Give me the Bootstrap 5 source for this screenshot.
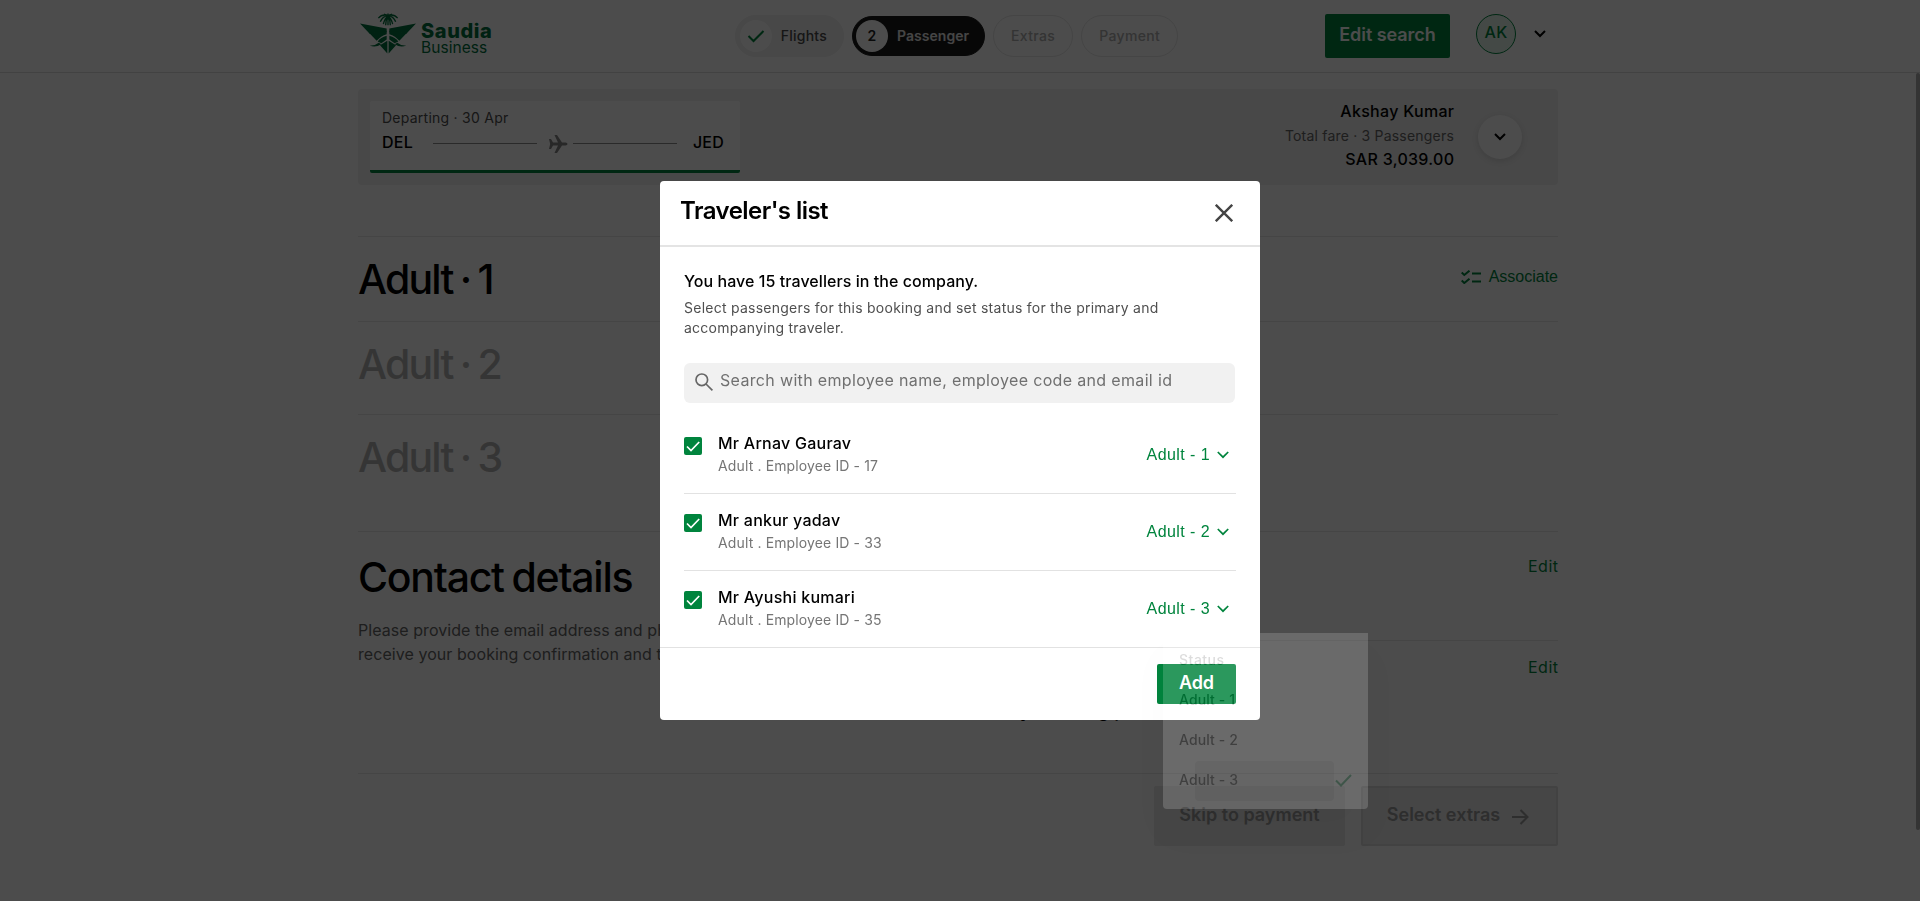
<!DOCTYPE html>
<html lang="en">
<head>
<meta charset="utf-8">
<meta name="viewport" content="width=device-width, initial-scale=1">
<title>Saudia Business - Passenger</title>
<link href="https://cdn.jsdelivr.net/npm/bootstrap@5.3.0/dist/css/bootstrap.min.css" rel="stylesheet">
<style>
  :root { --sv-green: #00843d; --sv-line: #e6e6e6; --sv-grey: #666; }
  body { font-family: Inter, "Liberation Sans", sans-serif; font-size: 16px; line-height: 24px; color: #000; background: #fff; height: 901px; overflow: hidden; }
  svg { display: block; flex: none; }
  .page-col { width: 1200px; margin-left: 358px; }
  .rule-top { border-top: 1px solid var(--sv-line); }
  .green { color: var(--sv-green); }
  .fw-mid { font-weight: 500; }
  .fs14 { font-size: 14px; line-height: 20px; }

  .site-head { height: 73px; border-bottom: 1px solid #dcdcdc; }
  .head-row { height: 72px; padding-right: 12px; }
  .brand-mark { margin: 0 0 6px 2px; }
  .brand-text { color: #00703c; margin: 6px 0 0 5px; width: 77px; }
  .brand-name { font-weight: 800; font-size: 20px; line-height: 18px; letter-spacing: .6px; }
  .brand-sub { font-size: 15.5px; line-height: 16px; letter-spacing: .05px; }
  .steps { margin-left: 237px; gap: 8px; }
  .step { height: 42px; border-radius: 21px; border: 1px solid #e6e6e6; font-size: 14px; font-weight: 500; color: #adadad; padding: 0 17px; letter-spacing: .35px; }
  .step-done { background: #f0f0f0; border-color: #f0f0f0; color: #4a4a4a; padding: 0 16px 0 4px; letter-spacing: .25px; width: 109px; }
  .step-now { height: 40px; background: #1a1a1a; border-color: #1a1a1a; color: #e8e8e8; font-weight: 600; padding: 0 14px 0 3px; width: 133px; letter-spacing: .05px; }
  .step-dot { width: 32px; height: 32px; border-radius: 50%; background: #fff; color: #222; margin-right: 9px; }
  .btn-search { width: 125px; height: 44px; border: 0; border-radius: 2px; background: var(--sv-green); color: #fff; font-weight: 600; font-size: 18px; padding: 0 0 3px; letter-spacing: -.05px; line-height: 38px; }
  .avatar { width: 40px; height: 40px; border-radius: 50%; border: 1px solid var(--sv-green); background: #e5f3ec; color: var(--sv-green); font-weight: 500; letter-spacing: .4px; margin: -4px 18px 0 26px; padding-bottom: 4px; }
  .head-chevron { margin-top: -4px; }

  .fare-bar { height: 96px; background: #f0f0f0; border-radius: 4px; margin-top: 16px; padding: 12px; }
  .leg { width: 370px; height: 72px; background: #fff; border-bottom: 3px solid var(--sv-green); border-radius: 2px; padding: 7px 16px 0 12px; }
  .leg .fs14 { color: #4d4d4d; letter-spacing: .25px; }
  .leg .fw-mid { letter-spacing: .22px; margin-top: 2px; }
  .leg-line { height: 1px; width: 104px; background: #8c8c8c; margin-top: 3px; }
  .leg-line-a { margin-left: 20px; margin-right: 9px; }
  .leg-line-b { margin-left: 3px; margin-right: auto; }
  .leg-plane { margin-top: 4px; }
  .fare-text { margin: -5px 24px 0 0; }
  .fare-text .fs14 { color: var(--sv-grey); letter-spacing: .2px; margin-top: 3px; margin-bottom: 1px; }
  .fare-text .fw-mid { letter-spacing: .3px; margin-right: -.3px; }
  .round-btn { width: 44px; height: 44px; border-radius: 50%; background: #fff; box-shadow: 0 2px 6px rgba(0,0,0,.12); margin-right: 24px; }

  .pax { height: 93px; padding-top: 17px; }
  .pax-first { height: 85px; margin-top: 51px; }
  .pax-last { height: 117px; }
  .big-title { font-weight: 500; font-size: 41px; line-height: 50px; margin: 0; letter-spacing: -1.8px; word-spacing: -2px; }
  .big-title.contact-title { letter-spacing: -1.25px; }
  .dim { color: #b3b3b3; }
  .arial { font-family: "Liberation Sans", Arial, sans-serif; }
  .associate { margin-top: 11px; gap: 8px; height: 24px; }
  .edit-link { letter-spacing: .5px; margin-right: -.5px; }
  .contact-sec { height: 242px; }
  .contact-left { width: 602px; padding-top: 20px; }
  .contact-left p { margin: 16px 0 0; color: var(--sv-grey); white-space: nowrap; letter-spacing: .06px; }
  .contact-right { width: 598px; }
  .contact-a { height: 108px; padding-top: 22px; }
  .contact-b { padding-top: 14px; }
  .contact-b h3 { font-size: 19px; font-weight: 500; line-height: 24px; margin: 20px 0 0; }
  .foot-row { padding-top: 12px; gap: 16px; }
  .btn-off { height: 60px; border-radius: 2px; background: #e9e9e9; border: 2px solid #e9e9e9; color: #999; font-weight: 600; font-size: 18px; padding: 0 0 3px; }
  .btn-skip { width: 191px; }
  .btn-extras { width: 197px; border-color: #dcdcdc; gap: 12px; padding-right: 3px; }
  .scroll-thumb { position: absolute; right: 0; top: 73px; width: 4px; height: 757px; background: #adadad; border-radius: 2px; }

  .modal-backdrop.dark { opacity: .7; }
  .modal-dialog.sized { max-width: 600px; margin: 181px auto 0; }
  .modal-content { border: 0; border-radius: 4px; height: 539px; color: #000; }
  .modal-header { height: 66px; border-bottom: 2px solid #e4e4e4; border-radius: 0; padding: 15px 27px 0 20px; align-items: flex-start; }
  .modal-title { font-size: 24px; font-weight: 600; line-height: 30px; letter-spacing: -.54px; }
  .x-btn { border: 0; background: none; padding: 0; margin-top: 8px; }
  .modal-body { padding: 22px 24px 0; height: 400px; flex: none; }
  .t-lead { letter-spacing: .06px; }
  .t-sub { margin: 5px 0 0; color: #4f4f4f; letter-spacing: .25px; }
  .search-box { height: 40px; margin-top: 25px; border-radius: 6px; background: #f1f1f1; color: #707070; padding: 0 11px; gap: 7px; letter-spacing: .34px; margin-right: 1px; }
  .search-box svg { margin-bottom: 3px; }
  .search-box span { padding-bottom: 6px; }
  .trav-list { padding-top: 14px; }
  .trav { height: 77px; border-bottom: 1px solid #e2e2e2; }
  .trav:last-child { border-bottom: 0; height: 76px; }
  .tick { width: 18px; height: 18px; border-radius: 2px; background: var(--sv-green); margin-top: 20px; }
  .trav-text { padding: 14px 0 0 16px; letter-spacing: .25px; }
  .trav-id { margin-top: 1px; color: #757575; letter-spacing: .13px; }
  .status-pick { letter-spacing: .43px; gap: 7px; padding-right: 7px; }
  .status-pick svg { margin-bottom: 1px; }
  .modal-footer { height: 73px; border-top: 1px solid #e2e2e2; padding: 16px 24px; }
  .modal-footer > .btn-add { margin: 0; width: 79px; height: 40px; border: 0; border-radius: 2px; background: var(--sv-green); color: #fff; font-weight: 600; font-size: 18px; padding: 0 0 3px; letter-spacing: -.1px; }

  /* status menu, halfway through its fade-out */
  .status-menu { position: absolute; z-index: 1100; left: 1163px; top: 633px; width: 205px; height: 176px; opacity: .17; background: #fff; border-radius: 0 0 4px 4px; padding: 7px 16px 0; box-shadow: 0 24px 40px 4px rgba(0,0,0,.12); }
  .status-menu div { height: 40px; font-size: 14px; line-height: 40px; letter-spacing: .1px; font-weight: 500; color: #000; }
  .status-menu .menu-head { color: #333; letter-spacing: .5px; }
  .menu-hi { position: absolute; left: 32px; top: 128px; width: 139px; height: 40px; border-radius: 4px; background: #e0e0e0; z-index: -1; }
</style>
<script src="https://cdn.jsdelivr.net/npm/bootstrap@5.3.0/dist/js/bootstrap.bundle.min.js"></script>
</head>
<body>
<header class="site-head">
  <div class="page-col head-row d-flex align-items-center">
    <svg class="brand-mark" width="56" height="41" viewBox="0 0 168 122" fill="#00703c">
      <g fill="none" stroke="#00703c" stroke-width="4">
        <path d="M84 9 V36 M84 9 Q75 14 70 33 M84 9 Q93 14 98 33 M84 8 Q68 8 61 26 M84 8 Q100 8 107 26 M84 7 Q66 2 55 15 M84 7 Q102 2 113 15 M84 9 Q78 18 77 36 M84 9 Q90 18 91 36"/>
        <path d="M72 3 L84 8 L96 3 M84 1 V10"/>
      </g>
      <path d="M0 31 L80 46 V57 Q54 54 29 62 Z M168 31 L88 46 V57 Q114 54 139 62 Z"/>
      <path d="M27 59 L80 53 V63 Q62 68 50 83 Z M141 59 L88 53 V63 Q106 68 118 83 Z"/>
      <path d="M53 85 Q62 73 80 68 V79 L64 90 Z M115 85 Q106 73 88 68 V79 L104 90 Z"/>
      <path d="M60 96 L82 83 V121 Z M108 96 L86 83 V121 Z"/>
      <path d="M29 97 Q44 99 56 89 L64 93 Q46 105 29 97 Z M139 97 Q124 99 112 89 L104 93 Q122 105 139 97 Z"/>
    </svg>
    <div class="brand-text">
      <div class="brand-name">Saudia</div>
      <div class="brand-sub">Business</div>
    </div>
    <div class="steps d-flex align-items-center">
      <div class="step step-done d-flex align-items-center"><span class="step-dot d-flex align-items-center justify-content-center"><svg width="18" height="14" viewBox="0 0 18 14" fill="none" stroke="#00843d" stroke-width="2"><path d="M1.5 7 L6.5 12 L16.5 2"/></svg></span>Flights</div>
      <div class="step step-now d-flex align-items-center"><span class="step-dot d-flex align-items-center justify-content-center">2</span>Passenger</div>
      <div class="step d-flex align-items-center">Extras</div>
      <div class="step d-flex align-items-center">Payment</div>
    </div>
    <button class="btn btn-search ms-auto">Edit search</button>
    <div class="avatar d-flex align-items-center justify-content-center">AK</div>
    <svg class="head-chevron" width="12" height="8" viewBox="0 0 12 8" fill="none" stroke="#000" stroke-width="2"><path d="M1 1 L6 6 L11 1"/></svg>
  </div>
</header>

<main class="page-col">
  <section class="fare-bar d-flex align-items-center">
    <div class="leg">
      <div class="fs14">Departing · 30 Apr</div>
      <div class="d-flex align-items-center fw-mid">
        <span>DEL</span>
        <span class="leg-line leg-line-a"></span>
        <svg class="leg-plane" width="24" height="20" viewBox="-3 -1 24 20" fill="#858585"><path d="M0 4 H2 L4 7.5 H9 L5.5 0 H8 L13 7.5 H16.5 Q18.5 7.8 18.5 9 Q18.5 10.2 16.5 10.5 H13 L8 18 H5.5 L9 10.5 H4 L2 14 H0 L1.2 9 Z"/></svg>
        <span class="leg-line leg-line-b"></span>
        <span>JED</span>
      </div>
    </div>
    <div class="fare-text ms-auto text-end">
      <div class="fw-mid">Akshay Kumar</div>
      <div class="fs14">Total fare · 3 Passengers</div>
      <div class="fw-mid">SAR 3,039.00</div>
    </div>
    <div class="round-btn d-flex align-items-center justify-content-center"><svg width="12" height="8" viewBox="0 0 12 8" fill="none" stroke="#000" stroke-width="2"><path d="M1 1 L6 6 L11 1"/></svg></div>
  </section>

  <section class="pax pax-first rule-top d-flex justify-content-between">
    <h1 class="big-title">Adult · 1</h1>
    <a class="associate arial green text-decoration-none d-flex align-items-center">
      <svg width="20" height="14" viewBox="0 0 20 14" fill="none" stroke="#00843d" stroke-width="2"><path d="M.7 2.6 L3.3 5 L8.5 .7 M.7 10.6 L3.3 13 L8.5 8.7 M11 3.5 H20 M11 11.5 H20"/></svg>
      Associate</a>
  </section>
  <section class="pax rule-top"><h1 class="big-title dim">Adult · 2</h1></section>
  <section class="pax pax-last rule-top"><h1 class="big-title dim">Adult · 3</h1></section>

  <section class="contact-sec rule-top d-flex">
    <div class="contact-left">
      <h1 class="big-title contact-title">Contact details</h1>
      <p>Please provide the email address and phone<br>receive your booking confirmation and travel</p>
    </div>
    <div class="contact-right">
      <div class="contact-a text-end green"><span class="edit-link">Edit</span></div>
      <div class="contact-b rule-top">
        <div class="text-end green"><span class="edit-link">Edit</span></div>
        <h3>Primary booking person</h3>
      </div>
    </div>
  </section>
  <section class="foot-row rule-top d-flex justify-content-end">
    <button class="btn btn-off btn-skip">Skip to payment</button>
    <button class="btn btn-off btn-extras d-flex align-items-center justify-content-center">Select extras
      <svg class="mt-1" width="17" height="16" viewBox="0 0 17 16" fill="none" stroke="#999" stroke-width="2"><path d="M0 8 H15.5 M8.5 1 L15.5 8 L8.5 15"/></svg></button>
  </section>
</main>
<div class="scroll-thumb"></div>

<div class="modal-backdrop dark show"></div>
<div class="modal d-block overflow-hidden" tabindex="-1">
  <div class="modal-dialog sized">
    <div class="modal-content">
      <div class="modal-header">
        <h2 class="modal-title">Traveler's list</h2>
        <button class="x-btn" aria-label="Close"><svg width="18" height="18" viewBox="0 0 18 18" fill="none" stroke="#444" stroke-width="2.4"><path d="M.8 .8 L17.2 17.2 M17.2 .8 L.8 17.2"/></svg></button>
      </div>
      <div class="modal-body">
        <div class="fw-mid t-lead">You have 15 travellers in the company.</div>
        <div class="fs14 t-sub">Select passengers for this booking and set status for the primary and<br>accompanying traveler.</div>
        <div class="search-box d-flex align-items-center">
          <svg width="18" height="18" viewBox="0 0 18 18" fill="none" stroke="#666" stroke-width="1.7"><circle cx="6.8" cy="6.8" r="5.8"/><path d="M11 11 L17.4 17.4"/></svg>
          <span>Search with employee name, employee code and email id</span>
        </div>
        <div class="trav-list">
          <div class="trav d-flex">
            <span class="tick"><svg width="18" height="18" viewBox="0 0 18 18" fill="none" stroke="#fff" stroke-width="1.7"><path d="M3 9.5 L7 13.5 L15.2 5"/></svg></span>
            <div class="trav-text"><div class="fw-mid">Mr Arnav Gaurav</div><div class="fs14 trav-id">Adult . Employee ID - 17</div></div>
            <div class="status-pick arial green ms-auto d-flex align-items-center">Adult - 1 <svg width="12" height="8" viewBox="0 0 12 8" fill="none" stroke="#00843d" stroke-width="1.7"><path d="M.8 1 L6 6.2 L11.2 1"/></svg></div>
          </div>
          <div class="trav d-flex">
            <span class="tick"><svg width="18" height="18" viewBox="0 0 18 18" fill="none" stroke="#fff" stroke-width="1.7"><path d="M3 9.5 L7 13.5 L15.2 5"/></svg></span>
            <div class="trav-text"><div class="fw-mid">Mr ankur yadav</div><div class="fs14 trav-id">Adult . Employee ID - 33</div></div>
            <div class="status-pick arial green ms-auto d-flex align-items-center">Adult - 2 <svg width="12" height="8" viewBox="0 0 12 8" fill="none" stroke="#00843d" stroke-width="1.7"><path d="M.8 1 L6 6.2 L11.2 1"/></svg></div>
          </div>
          <div class="trav d-flex">
            <span class="tick"><svg width="18" height="18" viewBox="0 0 18 18" fill="none" stroke="#fff" stroke-width="1.7"><path d="M3 9.5 L7 13.5 L15.2 5"/></svg></span>
            <div class="trav-text"><div class="fw-mid">Mr Ayushi kumari</div><div class="fs14 trav-id">Adult . Employee ID - 35</div></div>
            <div class="status-pick arial green ms-auto d-flex align-items-center">Adult - 3 <svg width="12" height="8" viewBox="0 0 12 8" fill="none" stroke="#00843d" stroke-width="1.7"><path d="M.8 1 L6 6.2 L11.2 1"/></svg></div>
          </div>
        </div>
      </div>
      <div class="modal-footer"><button class="btn btn-add">Add</button></div>
    </div>
  </div>
</div>

<div class="status-menu">
  <span class="menu-hi"></span>
  <div class="menu-head">Status</div>
  <div>Adult - 1</div>
  <div>Adult - 2</div>
  <div class="d-flex align-items-center justify-content-between">Adult - 3 <svg width="17" height="13" viewBox="0 0 17 13" fill="none" stroke="#00843d" stroke-width="2"><path d="M1 6.5 L6 11.5 L16 1"/></svg></div>
</div>
</body>
</html>
